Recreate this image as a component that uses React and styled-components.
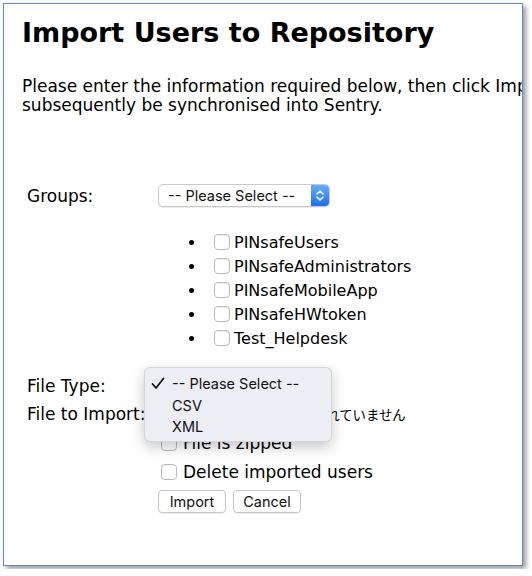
import styled, { createGlobalStyle } from 'styled-components';

const GlobalStyle = createGlobalStyle`
  html, body {
    margin: 0;
    padding: 0;
    background: #ffffff;
  }
  body {
    font-family: "DejaVu Sans", Verdana, sans-serif;
    color: #000;
  }
`;

const Frame = styled.div`
  position: relative;
  box-sizing: border-box;
  margin: 3px;
  width: 520px;
  height: 563px;
  padding: 13px 0 0 18px;
  border: 1px solid #5b8ad8;
  box-shadow: 3px 3px 5px rgba(0, 0, 0, 0.4);
  overflow: hidden;
  background: #fff;
`;

const Title = styled.h1`
  margin: 0;
  font: 700 27px/32px "DejaVu Sans", Verdana, sans-serif;
`;

const Intro = styled.p`
  margin: 28px 0 0;
  font-size: 17px;
  line-height: 19px;
  white-space: nowrap;
`;

const Form = styled.div`
  display: flex;
  flex-direction: column;
  margin: 69px 0 0 5px;
`;

const Row = styled.div`
  display: flex;
  align-items: center;
  height: ${({ h }) => h ?? 22}px;
  margin-top: ${({ gap }) => gap ?? 0}px;
  padding-left: ${({ indent }) => (indent ? 131 : 0)}px;
  font-size: 17px;
  white-space: nowrap;
`;

const Label = styled.div`
  width: 131px;
  flex: none;
`;

const Select = styled.div`
  box-sizing: border-box;
  display: flex;
  align-items: center;
  width: 172px;
  height: 23px;
  border: 1px solid #cacaca;
  border-radius: 5px;
  box-shadow: 0 1px 1px rgba(0, 0, 0, 0.08);
  background: #fff;
  overflow: hidden;
`;

const SelectText = styled.span`
  flex: 1;
  padding-left: 9px;
  font: 14.5px "Inter", "Liberation Sans", sans-serif;
  color: #111;
`;

const Stepper = styled.span`
  display: flex;
  align-items: center;
  justify-content: center;
  width: 18px;
  height: 100%;
  background: linear-gradient(#68adff, #1c6ef0);
`;

const List = styled.div`
  display: flex;
  flex-direction: column;
  margin-top: 23px;
  padding-left: 131px;
`;

const Item = styled.div`
  display: flex;
  align-items: center;
  height: 24px;
  padding-left: 31px;
  font-size: 16px;
`;

const Bullet = styled.span`
  width: 5px;
  height: 5px;
  border-radius: 50%;
  background: #000;
  margin-right: 20px;
`;

const Check = styled.span`
  box-sizing: border-box;
  flex: none;
  width: 16px;
  height: 16px;
  margin: 0 ${({ after }) => after ?? 4}px 0 ${({ before }) => before ?? 0}px;
  border: 1px solid #b9b9b9;
  border-radius: 4px;
  background: #fff;
  box-shadow: inset 0 1px 1px rgba(0, 0, 0, 0.05);
`;

const FileButton = styled.span`
  box-sizing: border-box;
  display: inline-flex;
  align-items: center;
  justify-content: center;
  width: 120px;
  height: 22px;
  margin-right: 8px;
  border: 1px solid #c8c8c8;
  border-radius: 4px;
  font: 13.5px "Noto Sans CJK JP", sans-serif;
`;

const FileText = styled.span`
  font: 13.4px "Noto Sans CJK JP", sans-serif;
`;

const Button = styled.button`
  box-sizing: border-box;
  width: 68px;
  height: 23px;
  margin-right: 7px;
  padding: 0;
  border: 1px solid #c6c6c6;
  border-radius: 4px;
  background: #fff;
  font: 14.5px "Inter", "Liberation Sans", sans-serif;
  color: #111;
  box-shadow: 0 1px 1px rgba(0, 0, 0, 0.06);
`;

const Menu = styled.div`
  position: absolute;
  left: 140px;
  top: 363px;
  box-sizing: border-box;
  width: 188px;
  height: 75px;
  padding: 5px 0;
  border: 1px solid rgba(0, 0, 0, 0.1);
  border-radius: 6px;
  background: #eceef3;
  box-shadow: 0 5px 14px rgba(0, 0, 0, 0.22);
  font: 14.5px "Inter", "Liberation Sans", sans-serif;
  color: #111;
`;

const MenuItem = styled.div`
  position: relative;
  display: flex;
  align-items: center;
  height: 21.5px;
  padding-left: 27px;
`;

const Tick = styled.svg`
  position: absolute;
  left: 6px;
  top: 4px;
`;

const StepIcon = () => (
  <svg width="10" height="15" viewBox="0 0 10 15">
    <path d="M2 6 L5 3 L8 6 M2 9 L5 12 L8 9" fill="none" stroke="#fff" strokeWidth="1.6" strokeLinecap="round" strokeLinejoin="round" />
  </svg>
);

const PleaseSelect = () => (
  <Select>
    <SelectText>-- Please Select --</SelectText>
    <Stepper><StepIcon /></Stepper>
  </Select>
);

const groups = ['PINsafeUsers', 'PINsafeAdministrators', 'PINsafeMobileApp', 'PINsafeHWtoken', 'Test_Helpdesk'];

export default function App() {
  return <>
    <GlobalStyle />
    <Frame>
      <Title>Import Users to Repository</Title>
      <Intro>
        Please enter the information required below, then click Import. Users will<br />
        subsequently be synchronised into Sentry.
      </Intro>
      <Form>
        <Row h={23}>
          <Label>Groups:</Label>
          <PleaseSelect />
        </Row>
        <List>
          {groups.map(g => (
            <Item key={g}>
              <Bullet />
              <Check />
              {g}
            </Item>
          ))}
        </List>
        <Row h={23} gap={24}>
          <Label>File Type:</Label>
          <PleaseSelect />
        </Row>
        <Row gap={6}>
          <Label>File to Import:</Label>
          <FileButton>ファイルを選択</FileButton>
          <FileText>選択されていません</FileText>
        </Row>
        <Row gap={7} indent>
          <Check before={3} after={6} />
          File is zipped
        </Row>
        <Row gap={7} indent>
          <Check before={3} after={6} />
          Delete imported users
        </Row>
        <Row h={23} gap={7} indent>
          <Button>Import</Button>
          <Button>Cancel</Button>
        </Row>
      </Form>
      <Menu>
        <MenuItem>
          <Tick width="14" height="13" viewBox="0 0 14 13">
            <path d="M1.5 7 L5 11 L12.5 1.5" fill="none" stroke="#111" strokeWidth="1.8" strokeLinecap="round" strokeLinejoin="round" />
          </Tick>
          -- Please Select --
        </MenuItem>
        <MenuItem>CSV</MenuItem>
        <MenuItem>XML</MenuItem>
      </Menu>
    </Frame>
  </>;
}
